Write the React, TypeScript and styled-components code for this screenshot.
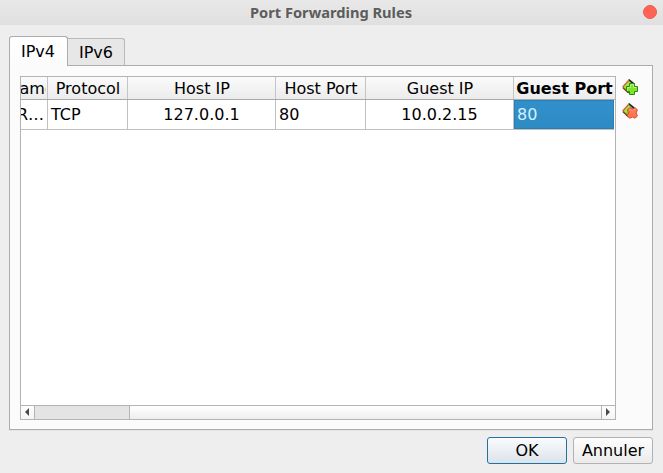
import React from "react";
import styled, { createGlobalStyle, css } from "styled-components";

const GlobalStyle = createGlobalStyle`
  * { box-sizing: border-box; }
  body { margin: 0; overflow: hidden; }
`;

const Dialog = styled.main`
  width: 663px;
  height: 473px;
  display: flex;
  flex-direction: column;
  background: #eeeeee;
  color: #000;
  font: 16px/20px "DejaVu Sans", sans-serif;
  white-space: nowrap;
  cursor: default;
`;

const TitleBar = styled.header`
  height: 25px;
  flex: none;
  display: grid;
  grid-template-columns: 26px 1fr 26px;
  align-items: center;
  background: linear-gradient(#e8e8e8, #e0e0e0);
`;

const Title = styled.h1`
  grid-column: 2;
  margin: 0;
  padding: 0 1px 2px 0;
  text-align: center;
  font: bold 14.67px/22px "Noto Sans", sans-serif;
  color: #5c5c5c;
`;

const CloseButton = styled.button`
  width: 14px;
  height: 14px;
  padding: 0;
  margin-left: 6px;
  margin-top: -1px;
  border: 1px solid #ec5d50;
  border-radius: 50%;
  background: #ff6355;
`;

const TabBar = styled.nav`
  display: flex;
  align-items: flex-end;
  height: 30px;
  margin: 11px 0 -1px 9px;
  flex: none;
`;

const Tab = styled.button<{ $active?: boolean }>`
  width: 59px;
  height: 30px;
  padding: 0 1px 0 0;
  border: 1px solid #acacac;
  border-bottom: 0;
  border-radius: 3px 3px 0 0;
  background: linear-gradient(#ffffff, #fbfbfb);
  color: #000;
  font: inherit;
  z-index: 1;
  ${(p) =>
    !p.$active &&
    css`
      height: 28px;
      width: 58px;
      margin-left: -1px;
      padding: 2px 0 0;
      border: 1px solid #b9b9b9;
      border-bottom-color: #acacac;
      border-radius: 0 3px 0 0;
      background: #e7e7e7;
      z-index: 0;
    `}
`;

const Pane = styled.section`
  display: flex;
  align-items: flex-start;
  width: 644px;
  height: 365px;
  margin-left: 9px;
  padding: 10px;
  flex: none;
  border: 1px solid #acacac;
  background: #fbfbfb;
  box-shadow: 0 1px 0 #e5e5e5;
`;

const TableFrame = styled.div`
  width: 596px;
  height: 344px;
  display: flex;
  flex-direction: column;
  border: 1px solid #b4b4b4;
  background: #fff;
`;

const Row = styled.div`
  display: grid;
  grid-template-columns: 27px 80px 148px 90px 148px 101px;
  flex: none;
`;

const HeaderRow = styled(Row)`
  height: 23px;
  border-bottom: 1px solid #a9a9a9;
  background: linear-gradient(#fbfbfb, #ebebeb);
`;

const HeaderCell = styled.div<{ $current?: boolean; $clipped?: boolean }>`
  display: flex;
  justify-content: ${(p) => (p.$clipped ? "flex-start" : "center")};
  align-items: center;
  overflow: hidden;
  padding: ${(p) => (p.$clipped || p.$current ? "2px 0 0" : "2px 0 0 1px")};
  border-right: ${(p) => (p.$current ? "0" : "1px solid #c4c4c4")};
  font-weight: ${(p) => (p.$current ? "bold" : "normal")};
`;

const ClippedLabel = styled.span`
  width: 25px;
  display: flex;
  overflow: hidden;
  text-indent: -1.5px;
`;

const BodyRow = styled(Row)`
  height: 30px;
`;

const Cell = styled.div<{ $center?: boolean; $selected?: boolean; $scrolled?: boolean }>`
  display: flex;
  align-items: center;
  justify-content: ${(p) => (p.$center ? "center" : "flex-start")};
  padding-left: ${(p) => (p.$center ? "0" : "3px")};
  overflow: hidden;
  border-right: 1px solid #c0c0c0;
  border-bottom: 1px solid #c0c0c0;
  ${(p) =>
    p.$scrolled &&
    css`
      padding: 0 3px 0 0;
      justify-content: flex-end;
    `}
  ${(p) =>
    p.$selected &&
    css`
      padding-left: 2px;
      margin: 0 1px 1px 0;
      border: 1px solid #2a7fb5;
      background: linear-gradient(#3190cb, #2e8ac3);
      color: #d5f1ff;
      box-shadow: 0 1px 0 #c0c0c0;
    `}
`;

const EmptyArea = styled.div`
  flex: 1;
`;

const ScrollBar = styled.div`
  display: grid;
  grid-template-columns: 14px 95px 1fr 14px;
  height: 14px;
  border-top: 1px solid #b4b4b4;
  background: linear-gradient(#ffffff, #eeeeee);
`;

const ScrollArrow = styled.div<{ $right?: boolean }>`
  display: flex;
  align-items: center;
  justify-content: center;
  padding: 0 1px 1px 0;
  background: linear-gradient(#fdfdfd, #f5f5f5);
  border-right: ${(p) => (p.$right ? "0" : "1px solid #b4b4b4")};
  border-left: ${(p) => (p.$right ? "1px solid #b4b4b4" : "0")};
`;

const Thumb = styled.div`
  background: #e4e4e4;
  border-right: 1px solid #b4b4b4;
`;

const Tools = styled.div`
  display: flex;
  flex-direction: column;
  gap: 8px;
  margin: 3px 0 0 6px;
  svg { display: block; }
`;

const Actions = styled.footer`
  display: flex;
  justify-content: flex-end;
  gap: 6px;
  padding: 7px 10px 0 0;
`;

const DialogButton = styled.button<{ $primary?: boolean }>`
  width: 80px;
  height: 27px;
  padding: 1px 0 0;
  border: 1px solid ${(p) => (p.$primary ? "#2370a3" : "#b2b2b2")};
  border-radius: 3px;
  background: ${(p) =>
    p.$primary ? "linear-gradient(#fafcfd, #dbe3ea)" : "linear-gradient(#fdfdfd, #ebebeb)"};
  color: #000;
  font: inherit;
`;

const ArrowGlyph = ({ right = false }: { right?: boolean }) => (
  <svg width="6" height="8" viewBox="0 0 6 8">
    <path d={right ? "M1 0 5 4 1 8z" : "M5 0 1 4 5 8z"} fill="#4a4a4a" />
  </svg>
);

const Diamond = () => (
  <>
    <path d="M7 1.5 1.2 8 7 13.5 12 8z" fill="#74d61c" />
    <path d="M2 8.1 7 2.6 9 4.6 4 10z" fill="#9dec45" />
    <path d="M6.3 1.7.7 8" stroke="#d9622f" strokeWidth="1.3" />
    <path d="M.8 8.4 6.6 14" stroke="#7d2f14" strokeWidth="1.4" />
    <path d="M6 1 7.2 0 12.8 4.6 12.4 6.4 11.2 6z" fill="#2b2b2b" />
  </>
);

const AddRuleIcon = () => (
  <svg width="16" height="16" viewBox="0 0 16 16" fill="none">
    <Diamond />
    <path
      d="M7.5 4.5h5v3h3v5h-3v3h-5v-3h-3v-5h3z"
      fill="#7fe32b"
      stroke="#2c8713"
      strokeLinejoin="round"
    />
    <path d="M5.5 11.5v-3h3v-3h3v3h3" stroke="#b4f56c" />
  </svg>
);

const RemoveRuleIcon = () => (
  <svg width="16" height="16" viewBox="0 0 16 16" fill="none">
    <Diamond />
    <path
      d="M7.6 4.7 10.4 6 13.2 4.7 15.4 6.9 14.2 9.9 15.4 12.9 13.2 15.2 10.4 14 7.6 15.2 5.4 12.9 6.6 9.9 5.4 6.9z"
      fill="#ff7653"
      stroke="#dc4a2e"
      strokeLinejoin="round"
    />
    <path d="m7.3 6.2 3.1 1.4 3.1-1.4" stroke="#ffa285" />
  </svg>
);

export default function App() {
  return (
    <>
      <GlobalStyle />
      <Dialog>
        <TitleBar>
          <Title>Port Forwarding Rules</Title>
          <CloseButton aria-label="Close" />
        </TitleBar>
        <TabBar>
          <Tab $active>IPv4</Tab>
          <Tab>IPv6</Tab>
        </TabBar>
        <Pane>
          <TableFrame>
            <HeaderRow>
              <HeaderCell $clipped>
                <ClippedLabel>ame</ClippedLabel>
              </HeaderCell>
              <HeaderCell>Protocol</HeaderCell>
              <HeaderCell>Host IP</HeaderCell>
              <HeaderCell>Host Port</HeaderCell>
              <HeaderCell>Guest IP</HeaderCell>
              <HeaderCell $current>Guest Port</HeaderCell>
            </HeaderRow>
            <BodyRow>
              <Cell $scrolled>R…</Cell>
              <Cell>TCP</Cell>
              <Cell $center>127.0.0.1</Cell>
              <Cell>80</Cell>
              <Cell $center>10.0.2.15</Cell>
              <Cell $selected>80</Cell>
            </BodyRow>
            <EmptyArea />
            <ScrollBar>
              <ScrollArrow>
                <ArrowGlyph />
              </ScrollArrow>
              <Thumb />
              <span />
              <ScrollArrow $right>
                <ArrowGlyph right />
              </ScrollArrow>
            </ScrollBar>
          </TableFrame>
          <Tools>
            <AddRuleIcon />
            <RemoveRuleIcon />
          </Tools>
        </Pane>
        <Actions>
          <DialogButton $primary>OK</DialogButton>
          <DialogButton>Annuler</DialogButton>
        </Actions>
      </Dialog>
    </>
  );
}
